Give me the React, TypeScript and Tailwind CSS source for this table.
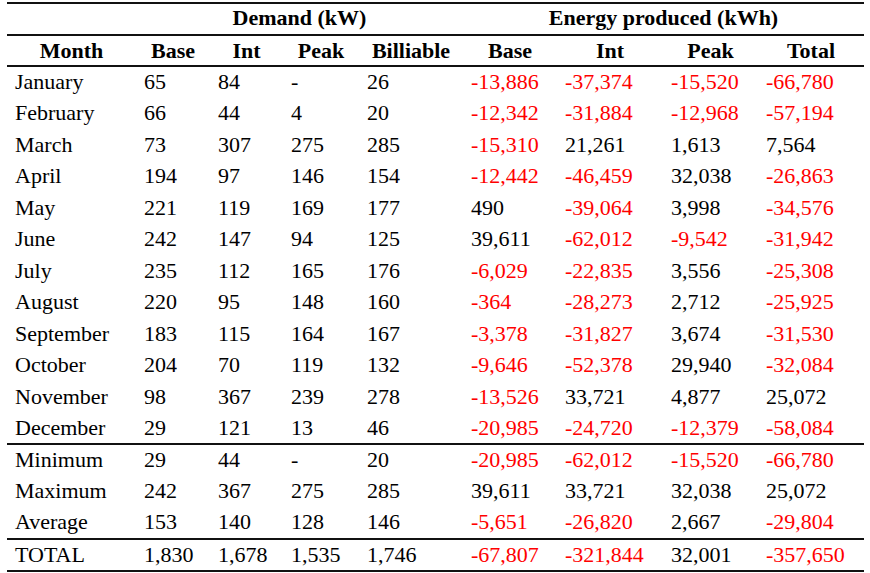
import React from "react";

const rows: string[][] = [
  ["January", "65", "84", "-", "26", "-13,886", "-37,374", "-15,520", "-66,780"],
  ["February", "66", "44", "4", "20", "-12,342", "-31,884", "-12,968", "-57,194"],
  ["March", "73", "307", "275", "285", "-15,310", "21,261", "1,613", "7,564"],
  ["April", "194", "97", "146", "154", "-12,442", "-46,459", "32,038", "-26,863"],
  ["May", "221", "119", "169", "177", "490", "-39,064", "3,998", "-34,576"],
  ["June", "242", "147", "94", "125", "39,611", "-62,012", "-9,542", "-31,942"],
  ["July", "235", "112", "165", "176", "-6,029", "-22,835", "3,556", "-25,308"],
  ["August", "220", "95", "148", "160", "-364", "-28,273", "2,712", "-25,925"],
  ["September", "183", "115", "164", "167", "-3,378", "-31,827", "3,674", "-31,530"],
  ["October", "204", "70", "119", "132", "-9,646", "-52,378", "29,940", "-32,084"],
  ["November", "98", "367", "239", "278", "-13,526", "33,721", "4,877", "25,072"],
  ["December", "29", "121", "13", "46", "-20,985", "-24,720", "-12,379", "-58,084"],
];

const stats: string[][] = [
  ["Minimum", "29", "44", "-", "20", "-20,985", "-62,012", "-15,520", "-66,780"],
  ["Maximum", "242", "367", "275", "285", "39,611", "33,721", "32,038", "25,072"],
  ["Average", "153", "140", "128", "146", "-5,651", "-26,820", "2,667", "-29,804"],
];

const total = ["TOTAL", "1,830", "1,678", "1,535", "1,746", "-67,807", "-321,844", "32,001", "-357,650"];

const widths = [129, 74, 73, 76, 104, 94, 106, 95, 106];
const heads = ["Month", "Base", "Int", "Peak", "Billiable", "Base", "Int", "Peak", "Total"];

function Row({ cells, className = "" }: { cells: string[]; className?: string }) {
  return (
    <tr className={`h-[31.5px] ${className}`}>
      {cells.map((c, i) => (
        <td
          key={i}
          className={`pl-2 p-0 align-middle whitespace-nowrap ${
            c.startsWith("-") && c.length > 1 ? "text-[#ff0000]" : "text-black"
          }`}
        >
          {c}
        </td>
      ))}
    </tr>
  );
}

export default function App() {
  return (
    <div className="w-[870px] h-[573px] bg-white pt-[2px] pl-[7px]">
      <table
        className="table-fixed border-collapse text-[22px] leading-none"
        style={{ fontFamily: '"Liberation Serif", "Times New Roman", serif' }}
      >
        <colgroup>
          {widths.map((w, i) => (
            <col key={i} style={{ width: w }} />
          ))}
        </colgroup>
        <thead>
          <tr className="h-[32px] border-t-2 border-[#111]">
            <th className="p-0" />
            <th colSpan={4} className="p-0 font-bold text-center pb-[2px]">
              Demand (kW)
            </th>
            <th colSpan={4} className="p-0 font-bold text-center pb-[2px]">
              Energy produced (kWh)
            </th>
          </tr>
          <tr className="h-[31px] border-t-2 border-b-2 border-[#111]">
            {heads.map((h, i) => (
              <th key={i} className="p-0 font-bold text-center">
                {h}
              </th>
            ))}
          </tr>
        </thead>
        <tbody>
          {rows.map((r, i) => (
            <Row key={i} cells={r} />
          ))}
          {stats.map((r, i) => (
            <Row key={i} cells={r} className={i === 0 ? "border-t-2 border-[#111]" : ""} />
          ))}
          <Row cells={total} className="border-t-2 border-b-2 border-[#111] !h-[32px]" />
        </tbody>
      </table>
    </div>
  );
}
